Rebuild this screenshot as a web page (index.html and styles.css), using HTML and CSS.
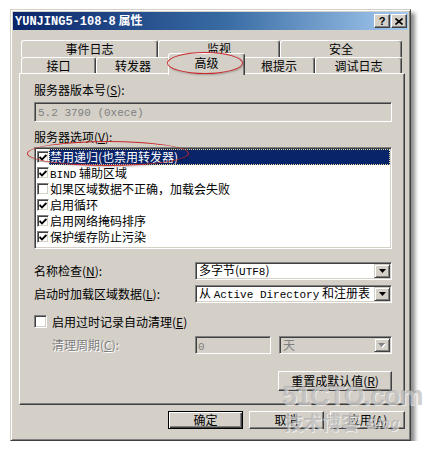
FILE: index.html
```html
<!DOCTYPE html>
<html>
  <head>
    <meta charset="utf-8" />
    <title>YUNJING5-108-8 属性</title>
    <link rel="stylesheet" href="styles.css">
  </head>

  <body>
    <div class="window">
      <div class="titlebar">
        <span class="title"><span class="title-en">YUNJING5-108-8</span> 属性</span>
        <div class="caption-buttons">
          <span class="cap-btn help">?</span>
          <span class="cap-btn">
            <svg width="8" height="7" viewBox="0 0 8 7"><path d="M0.5 0.5 L7.5 6.5 M7.5 0.5 L0.5 6.5" stroke="#000" stroke-width="1.6" /></svg>
          </span>
        </div>
      </div>

      <div class="dialog">
        <div class="tabs">
          <div class="tab-row">
            <div class="tab" style="width: 137px">事件日志</div>
            <div class="tab" style="width: 122px">监视</div>
            <div class="tab" style="width: 122px">安全</div>
          </div>
          <div class="tab-row front">
            <div class="tab" style="width: 75px">接口</div>
            <div class="tab" style="width: 74px">转发器</div>
            <div class="tab active" style="width: 77px">高级</div>
            <div class="tab" style="width: 72px">根提示</div>
            <div class="tab" style="width: 87px">调试日志</div>
          </div>
        </div>

        <div class="panel">
          <div class="label">服务器版本号(<u>S</u>):</div>
          <div class="textbox disabled"><span class="en">5.2 3790 (0xece)</span></div>

          <div class="label gap-list">服务器选项(<u>V</u>):</div>
          <div class="listbox">
            <div class="item selected">
              <span class="check"><svg width="8" height="7" viewBox="0 0 8 7"><polyline points="0.6,3 3,5.4 7.4,1" fill="none" stroke="#000" stroke-width="1.8" /></svg></span>
              <span class="item-text">禁用递归(也禁用转发器)</span>
            </div>
            <div class="item">
              <span class="check"><svg width="8" height="7" viewBox="0 0 8 7"><polyline points="0.6,3 3,5.4 7.4,1" fill="none" stroke="#000" stroke-width="1.8" /></svg></span>
              <span class="item-text"><span class="en">BIND</span> 辅助区域</span>
            </div>
            <div class="item">
              <span class="check"></span>
              <span class="item-text">如果区域数据不正确，加载会失败</span>
            </div>
            <div class="item">
              <span class="check"><svg width="8" height="7" viewBox="0 0 8 7"><polyline points="0.6,3 3,5.4 7.4,1" fill="none" stroke="#000" stroke-width="1.8" /></svg></span>
              <span class="item-text">启用循环</span>
            </div>
            <div class="item">
              <span class="check"><svg width="8" height="7" viewBox="0 0 8 7"><polyline points="0.6,3 3,5.4 7.4,1" fill="none" stroke="#000" stroke-width="1.8" /></svg></span>
              <span class="item-text">启用网络掩码排序</span>
            </div>
            <div class="item">
              <span class="check"><svg width="8" height="7" viewBox="0 0 8 7"><polyline points="0.6,3 3,5.4 7.4,1" fill="none" stroke="#000" stroke-width="1.8" /></svg></span>
              <span class="item-text">保护缓存防止污染</span>
            </div>
          </div>

          <div class="field-row first">
            <span class="field-label">名称检查(<u>N</u>):</span>
            <div class="combo">
              <span class="combo-text">多字节(<span class="en">UTF8</span>)</span>
              <span class="drop"><svg width="7" height="4" viewBox="0 0 7 4"><path d="M0 0 H7 L3.5 4 Z" fill="#000" /></svg></span>
            </div>
          </div>

          <div class="field-row">
            <span class="field-label">启动时加载区域数据(<u>L</u>):</span>
            <div class="combo">
              <span class="combo-text">从 <span class="en">Active Directory</span> 和注册表</span>
              <span class="drop"><svg width="7" height="4" viewBox="0 0 7 4"><path d="M0 0 H7 L3.5 4 Z" fill="#000" /></svg></span>
            </div>
          </div>

          <div class="check-row">
            <span class="checkbox"></span>
            <span>启用过时记录自动清理(<u>E</u>)</span>
          </div>

          <div class="field-row scavenge">
            <span class="field-label disabled-text">清理周期(<u>C</u>):</span>
            <div class="textbox disabled small"><span class="en">0</span></div>
            <div class="combo disabled unit">
              <span class="combo-text">天</span>
              <span class="drop"><svg width="8" height="5" viewBox="0 0 8 5"><path d="M1 1 H8 L4.5 5 Z" fill="#fff" /><path d="M0 0 H7 L3.5 4 Z" fill="#808080" /></svg></span>
            </div>
          </div>

          <div class="reset-row">
            <button class="btn reset">重置成默认值(<u>R</u>)</button>
          </div>
        </div>

        <div class="dialog-buttons">
          <button class="btn default">确定</button>
          <button class="btn">取消</button>
          <button class="btn">应用(<u>A</u>)</button>
        </div>
      </div>

      <div class="watermark">
        <div class="wm-site">51CTO.com</div>
        <div class="wm-line"><span class="wm-cn">技术博客</span><span class="wm-blog">Blog</span></div>
      </div>

      <div class="mark mark-tab"></div>
      <div class="mark mark-item"></div>
    </div>
  </body>
</html>
```

FILE: styles.css
```css
body {
  margin: 0;
  background-color: #ffffff;
  font-family: "Noto Sans CJK SC", "Liberation Sans", sans-serif;
  font-size: 12px;
  color: #000000;
}

.en {
  font-family: "Liberation Mono", monospace;
  font-size: 11px;
}

u {
  text-decoration-thickness: 1px;
  text-underline-offset: 1px;
}

.window {
  position: relative;
  box-sizing: border-box;
  width: 401px;
  height: 432px;
  margin: 9px 0 0 10px;
  padding: 2px;
  background-color: #d4d0c8;
  border: 1px solid;
  border-color: #d4d0c8 #404040 #404040 #d4d0c8;
  box-shadow: inset 1px 1px #ffffff, inset -1px -1px #808080, 4px 4px 4px rgba(0, 0, 0, 0.45);
}

/* title bar */
.titlebar {
  display: flex;
  align-items: center;
  justify-content: space-between;
  height: 18px;
  padding-left: 2px;
  background: linear-gradient(to right, #0a246a, #3a6ea5 55%, #a6caf0);
}

.title {
  color: #ffffff;
  font-weight: bold;
  font-size: 12px;
  line-height: 16px;
}

.title-en {
  font-family: "Liberation Mono", monospace;
  font-size: 12px;
}

.caption-buttons {
  display: flex;
  gap: 1px;
  margin-right: 1px;
}

.cap-btn {
  box-sizing: border-box;
  display: flex;
  align-items: center;
  justify-content: center;
  width: 16px;
  height: 14px;
  background-color: #d4d0c8;
  border: 1px solid;
  border-color: #ffffff #404040 #404040 #ffffff;
  box-shadow: inset -1px -1px #808080;
}

.cap-btn.help {
  font-family: "Liberation Sans", sans-serif;
  font-weight: bold;
  font-size: 11px;
  line-height: 11px;
}

/* dialog body */
.dialog {
  padding: 10px 0 0 6px;
}

.tabs {
  width: 381px;
  margin-left: 2px;
}

.tab-row {
  display: flex;
  height: 17px;
}

.tab-row.front {
  height: 16px;
}

.tab {
  box-sizing: border-box;
  height: 100%;
  border: 1px solid;
  border-bottom: none;
  border-color: #ffffff #404040 transparent #ffffff;
  border-radius: 3px 3px 0 0;
  box-shadow: inset -1px 0 #808080;
  text-align: center;
  line-height: 16px;
}

.tab.active {
  position: relative;
  z-index: 1;
  height: 22px;
  margin: -4px -2px 0 -2px;
  padding-top: 1px;
  background-color: #d4d0c8;
}

.panel {
  box-sizing: border-box;
  width: 386px;
  height: 332px;
  padding: 9px 12px 0 14px;
  border: 1px solid;
  border-color: #ffffff #404040 #404040 #ffffff;
  box-shadow: inset -1px -1px #808080;
}

.label {
  height: 14px;
  line-height: 14px;
}

.label.gap-list {
  margin-top: 8px;
}

.textbox {
  box-sizing: border-box;
  height: 20px;
  margin-top: 5px;
  padding: 0 3px;
  line-height: 16px;
  border: 1px solid;
  border-color: #808080 #ffffff #ffffff #808080;
  box-shadow: inset 1px 1px #404040, inset -1px -1px #d4d0c8;
  background-color: #ffffff;
}

.textbox.disabled {
  background-color: #d4d0c8;
  color: #808080;
}

.listbox {
  box-sizing: border-box;
  height: 102px;
  margin-top: 3px;
  padding: 1px 1px 0 1px;
  border: 1px solid;
  border-color: #808080 #ffffff #ffffff #808080;
  box-shadow: inset 1px 1px #404040, inset -1px -1px #d4d0c8;
  background-color: #ffffff;
}

.item {
  display: flex;
  align-items: center;
  height: 16px;
}

.check {
  box-sizing: border-box;
  display: flex;
  align-items: center;
  justify-content: center;
  flex: none;
  width: 12px;
  height: 12px;
  margin: 0 0 0 1px;
  border: 1px solid;
  border-color: #808080 #ffffff #ffffff #808080;
  box-shadow: inset 1px 1px #404040, inset -1px -1px #d4d0c8;
  background-color: #ffffff;
}

.item-text {
  flex: 1;
  height: 16px;
  line-height: 16px;
  padding-left: 1px;
  white-space: nowrap;
}

.item.selected .item-text {
  background-color: #0a246a;
  color: #ffffff;
  outline: 1px dotted #e8d8a0;
  outline-offset: -1px;
}

.field-row {
  display: flex;
  align-items: center;
  height: 18px;
  margin-top: 5px;
}

.field-row.first {
  margin-top: 13px;
}

.field-label {
  flex: 1;
  line-height: 14px;
}

.combo {
  box-sizing: border-box;
  display: flex;
  align-items: center;
  width: 197px;
  height: 18px;
  padding: 1px 2px 1px 2px;
  border: 1px solid;
  border-color: #808080 #ffffff #ffffff #808080;
  box-shadow: inset 1px 1px #404040, inset -1px -1px #d4d0c8;
  background-color: #ffffff;
}

.combo-text {
  flex: 1;
  padding-left: 1px;
  line-height: 14px;
  white-space: nowrap;
}

.drop {
  box-sizing: border-box;
  display: flex;
  align-items: center;
  justify-content: center;
  flex: none;
  width: 16px;
  height: 14px;
  margin-right: -1px;
  background-color: #d4d0c8;
  border: 1px solid;
  border-color: #d4d0c8 #404040 #404040 #d4d0c8;
  box-shadow: inset 1px 1px #ffffff, inset -1px -1px #808080;
}

.combo.disabled {
  background-color: #d4d0c8;
  color: #808080;
}

.check-row {
  display: flex;
  align-items: center;
  gap: 5px;
  height: 13px;
  margin-top: 12px;
  line-height: 14px;
}

.checkbox {
  box-sizing: border-box;
  width: 13px;
  height: 13px;
  border: 1px solid;
  border-color: #808080 #ffffff #ffffff #808080;
  box-shadow: inset 1px 1px #404040, inset -1px -1px #d4d0c8;
  background-color: #ffffff;
}

.field-row.scavenge {
  margin-top: 8px;
}

.scavenge .field-label {
  padding-left: 18px;
}

.disabled-text {
  color: #808080;
  text-shadow: 1px 1px #ffffff;
}

.textbox.small {
  width: 76px;
  height: 18px;
  margin: 0 8px 0 0;
  padding-left: 2px;
  line-height: 15px;
}

.combo.unit {
  width: 113px;
}

.reset-row {
  display: flex;
  justify-content: flex-end;
  margin-top: 17px;
}

.btn {
  box-sizing: border-box;
  height: 18px;
  padding: 0;
  font-family: inherit;
  font-size: 12px;
  line-height: 14px;
  color: #000000;
  background-color: #d4d0c8;
  border: 1px solid;
  border-color: #ffffff #404040 #404040 #ffffff;
  box-shadow: inset -1px -1px #808080;
}

.btn.reset {
  width: 114px;
  height: 20px;
}

.btn.default {
  border-color: #000000;
  box-shadow: inset 1px 1px #ffffff, inset -1px -1px #404040, inset -2px -2px #808080;
}

.dialog-buttons {
  display: flex;
  justify-content: flex-end;
  gap: 6px;
  width: 386px;
  margin-top: 6px;
}

.dialog-buttons .btn {
  width: 75px;
}

/* blog watermark over the bottom right */
.watermark {
  position: absolute;
  left: 271px;
  top: 372px;
  color: rgba(160, 160, 160, 0.5);
  text-shadow: 1px 1px rgba(255, 255, 255, 0.6);
  pointer-events: none;
}

.wm-site {
  font-family: "Liberation Sans", sans-serif;
  font-weight: bold;
  font-size: 27px;
  line-height: 28px;
  letter-spacing: -1px;
}

.wm-line {
  display: flex;
  align-items: flex-end;
  gap: 6px;
  margin-left: 2px;
}

.wm-cn {
  font-size: 19px;
  font-weight: bold;
  line-height: 24px;
}

.wm-blog {
  font-family: "Liberation Sans", sans-serif;
  font-size: 15px;
  font-weight: bold;
  font-style: italic;
  line-height: 22px;
}

/* red hand-drawn circles */
.mark {
  position: absolute;
  border: 1.5px solid #c8282a;
  border-radius: 50%;
  box-shadow: 1px 1px 2px rgba(0, 0, 0, 0.25);
  pointer-events: none;
}

.mark-tab {
  left: 156px;
  top: 42px;
  width: 74px;
  height: 20px;
  z-index: 2;
}

.mark-item {
  left: 16px;
  top: 131px;
  width: 160px;
  height: 23px;
  z-index: 2;
}
```
